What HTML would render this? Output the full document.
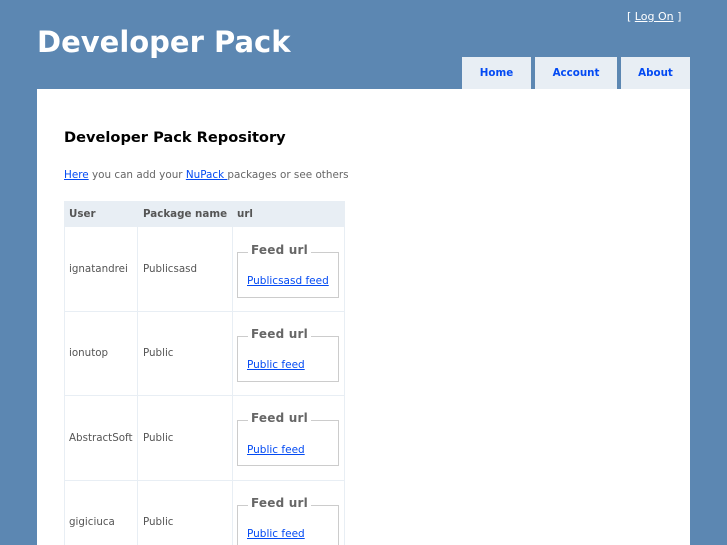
<!DOCTYPE html><html><head><style>
html,body{margin:0;width:727px;height:545px;overflow:hidden}
body{background:#5c87b2;font-family:"DejaVu Sans","Liberation Sans",sans-serif;position:relative}
.a{position:absolute;white-space:nowrap}
a{color:#034af3;text-decoration:underline}
.tab{position:absolute;top:57px;height:32px;background:#e8eef4;color:#034af3;font-weight:bold;font-size:10.3px;line-height:32px;text-align:center}
.c{font-size:10.3px;color:#555}
.fs{position:absolute;left:237px;width:100px;height:44px;border:1px solid #ccc}
.lg{position:absolute;left:248px;background:#fff;padding:0 3px;font-weight:bold;font-size:12px;letter-spacing:0.2px;color:#666}
.lk{font-size:10.5px}
</style></head><body>
<div class="a" style="left:627px;top:10px;font-size:11px;color:#fff">[ <a style="color:#fff" href="#">Log On</a> ]</div>
<div class="a" style="left:37px;top:25px;font-size:29px;font-weight:bold;color:#fff">Developer Pack</div>
<div class="tab" style="left:462px;width:69px">Home</div>
<div class="tab" style="left:535px;width:82px">Account</div>
<div class="tab" style="left:621px;width:69px">About</div>
<div style="position:absolute;left:37px;top:89px;width:653px;height:456px;background:#fff"></div>
<div class="a" style="left:64px;top:129px;font-size:14.6px;font-weight:bold;color:#000">Developer Pack Repository</div>
<div class="a" style="left:64px;top:169px;font-size:10.4px;color:#666"><a href="#">Here</a> you can add your <a href="#">NuPack </a>packages or see others</div>
<div style="position:absolute;left:64px;top:201px;width:279px;height:350px;border:1px solid #e8eef4;border-bottom:0"></div>
<div style="position:absolute;left:64px;top:201px;width:281px;height:26px;background:#e8eef4"></div>
<div class="a" style="left:69px;top:208px;font-size:10.3px;font-weight:bold;color:#555">User</div>
<div class="a" style="left:143px;top:208px;font-size:10.3px;font-weight:bold;color:#555">Package name</div>
<div class="a" style="left:237px;top:208px;font-size:10.3px;font-weight:bold;color:#555">url</div>
<div style="position:absolute;left:137px;top:227px;width:1px;height:320px;background:#e8eef4"></div>
<div style="position:absolute;left:232px;top:227px;width:1px;height:320px;background:#e8eef4"></div>
<div style="position:absolute;left:64px;top:311px;width:281px;height:1px;background:#e8eef4"></div>
<div style="position:absolute;left:64px;top:395px;width:281px;height:1px;background:#e8eef4"></div>
<div style="position:absolute;left:64px;top:480px;width:281px;height:1px;background:#e8eef4"></div>

<div class="a c" style="left:69px;top:263px">ignatandrei</div><div class="a c" style="left:143px;top:263px">Publicsasd</div>
<div class="fs" style="top:252px"></div><div class="a lg" style="top:243px">Feed url</div><div class="a lk" style="left:247px;top:275px"><a href="#">Publicsasd feed</a></div>

<div class="a c" style="left:69px;top:347px">ionutop</div><div class="a c" style="left:143px;top:347px">Public</div>
<div class="fs" style="top:336px"></div><div class="a lg" style="top:327px">Feed url</div><div class="a lk" style="left:247px;top:359px"><a href="#">Public feed</a></div>

<div class="a c" style="left:69px;top:432px">AbstractSoft</div><div class="a c" style="left:143px;top:432px">Public</div>
<div class="fs" style="top:420px"></div><div class="a lg" style="top:411px">Feed url</div><div class="a lk" style="left:247px;top:444px"><a href="#">Public feed</a></div>

<div class="a c" style="left:69px;top:516px">gigiciuca</div><div class="a c" style="left:143px;top:516px">Public</div>
<div class="fs" style="top:505px"></div><div class="a lg" style="top:496px">Feed url</div><div class="a lk" style="left:247px;top:528px"><a href="#">Public feed</a></div>
</body></html>
